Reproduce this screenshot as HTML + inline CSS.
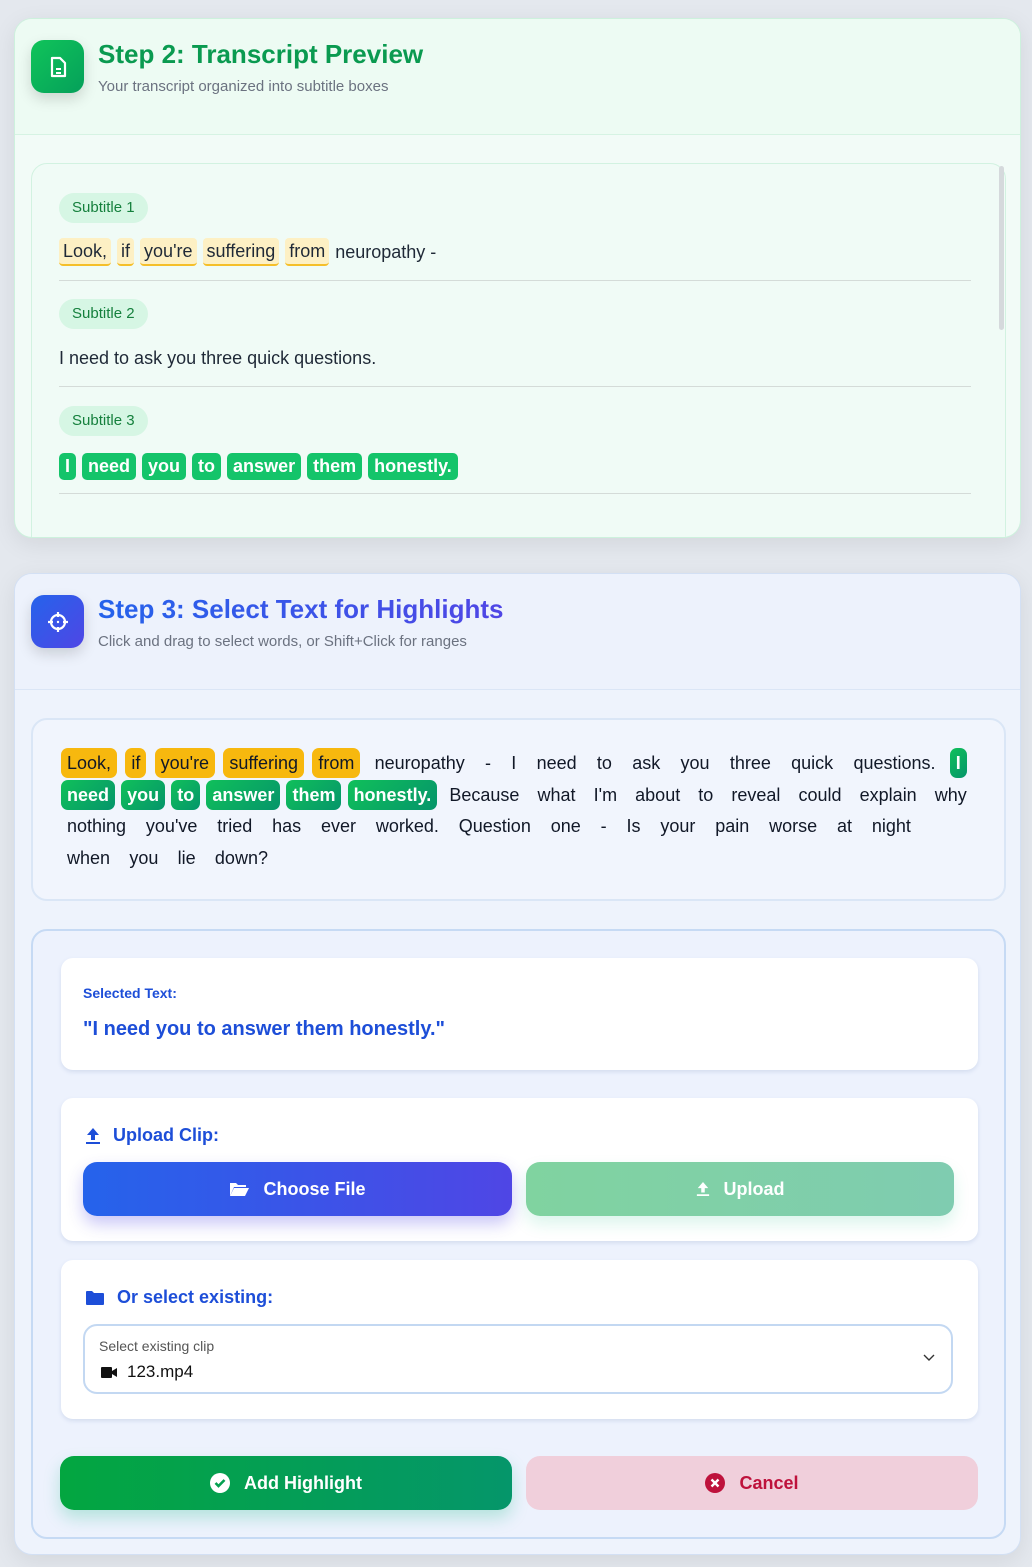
<!DOCTYPE html>
<html><head><meta charset="utf-8"><style>
*{box-sizing:border-box;margin:0;padding:0}
body{width:1032px;height:1567px;background:#e4e8ee;font-family:"Liberation Sans",sans-serif;position:relative;overflow:hidden;color:#1f2937}
.abs{position:absolute}
.card{position:absolute;left:14px;width:1007px;border-radius:18px;box-shadow:0 6px 24px rgba(0,0,0,.08);overflow:hidden}
.icon{position:absolute;left:16px;width:53px;height:53px;border-radius:13px;box-shadow:0 6px 14px rgba(0,0,0,.15);display:flex;align-items:center;justify-content:center}
.title{position:absolute;left:83px;font-size:26px;font-weight:bold}
.sub{position:absolute;left:83px;font-size:15px;color:#6b7280}
.pill{position:absolute;left:45px;height:30px;padding:0 13px;border-radius:15px;background:#d6f6e4;color:#15803d;font-size:15px;line-height:30px}
.line{position:absolute;left:45px;width:912px;height:1px;background:#d4dbd8}
.row{position:absolute;left:45px;font-size:18px;display:flex;gap:6px;align-items:center;height:30px}
.y{background:#fdf0c4;border-bottom:2px solid #f5bf2a;border-radius:4px;padding:0 4px;line-height:26px}
.g{background:#14c46a;color:#fff;font-weight:bold;border-radius:5px;padding:0 6px;line-height:27px}
.tl{position:absolute;left:28px;width:912px;display:flex;justify-content:space-between;font-size:18px;height:31px;align-items:center;color:#111827}
.tl span{padding:0 6px;line-height:30px;border-radius:7px}
.Y{background:#f7b80e}
.G{background:linear-gradient(135deg,#10c05a,#05956a);color:#fff;font-weight:bold}
.wc{position:absolute;left:28px;width:917px;background:#fff;border-radius:12px;box-shadow:0 2px 4px rgba(100,130,180,.18)}
.btn{position:absolute;height:54px;border-radius:14px;display:flex;align-items:center;justify-content:center;gap:14px;font-size:18px;font-weight:bold;color:#fff}
.lbl{position:absolute;left:24px;font-size:18px;font-weight:bold;color:#1d4ed8;display:flex;align-items:center;gap:12px}
</style></head><body>

<div class="card" style="top:18px;height:520px;background:#f2fbf7;border:1px solid #cdf1dd">
  <div class="abs" style="left:0;top:0;width:1007px;height:116px;background:#edfbf3;border-bottom:1px solid #d6f3e3"></div>
  <div class="icon" style="top:21px;background:linear-gradient(135deg,#10c45a,#05a05a)">
    <svg width="22" height="24" viewBox="0 0 22 24"><path d="M5 3h8l5 5v13H5z" fill="none" stroke="#fff" stroke-width="2.2" stroke-linejoin="round"/><path d="M9 14h5M9 18h5" stroke="#fff" stroke-width="2"/></svg>
  </div>
  <div class="title" style="top:20px;color:#0a9a50">Step 2: Transcript Preview</div>
  <div class="sub" style="top:59px">Your transcript organized into subtitle boxes</div>
  <div class="abs" style="left:16px;top:144px;width:975px;height:400px;border:1px solid #d2f2e1;border-radius:16px;background:#f0fbf6">
    <div class="abs" style="left:967px;top:2px;width:5px;height:164px;background:#d5d9dc;border-radius:3px"></div>
    <div class="pill" style="top:29px;left:27px">Subtitle 1</div>
    <div class="row" style="top:73px;left:27px"><span class="y">Look,</span><span class="y">if</span><span class="y">you're</span><span class="y">suffering</span><span class="y">from</span><span>neuropathy -</span></div>
    <div class="line" style="top:116px;left:27px"></div>
    <div class="pill" style="top:135px;left:27px">Subtitle 2</div>
    <div class="row" style="top:179px;left:27px"><span>I need to ask you three quick questions.</span></div>
    <div class="line" style="top:222px;left:27px"></div>
    <div class="pill" style="top:242px;left:27px">Subtitle 3</div>
    <div class="row" style="top:287px;left:27px"><span class="g">I</span><span class="g">need</span><span class="g">you</span><span class="g">to</span><span class="g">answer</span><span class="g">them</span><span class="g">honestly.</span></div>
    <div class="line" style="top:329px;left:27px"></div>
  </div>
</div>

<div class="card" style="top:573px;height:982px;background:#eef3fc;border:1px solid #d3e0f4">
  <div class="abs" style="left:0;top:0;width:1007px;height:116px;background:#edf2fc;border-bottom:1px solid #dbe6f6"></div>
  <div class="icon" style="top:21px;background:linear-gradient(135deg,#2563eb,#4f46e5)">
    <svg width="24" height="24" viewBox="0 0 24 24"><circle cx="12" cy="12" r="7" fill="none" stroke="#fff" stroke-width="2.2"/><path d="M12 2v5M12 17v5M2 12h5M17 12h5" stroke="#fff" stroke-width="2.2"/><circle cx="12" cy="12" r="1.2" fill="#fff"/></svg>
  </div>
  <div class="title" style="top:20px;background:linear-gradient(90deg,#2563eb,#4f46e5);-webkit-background-clip:text;color:transparent">Step 3: Select Text for Highlights</div>
  <div class="sub" style="top:59px">Click and drag to select words, or Shift+Click for ranges</div>

  <div class="abs" style="left:16px;top:144px;width:975px;height:183px;border:2px solid #dae6f6;border-radius:16px;background:#f1f5fd">
    <div class="tl" style="top:27px;width:906px"><span class="Y">Look,</span><span class="Y">if</span><span class="Y">you're</span><span class="Y">suffering</span><span class="Y">from</span><span>neuropathy</span><span>-</span><span>I</span><span>need</span><span>to</span><span>ask</span><span>you</span><span>three</span><span>quick</span><span>questions.</span><span class="G">I</span></div>
    <div class="tl" style="top:59px;width:912px"><span class="G">need</span><span class="G">you</span><span class="G">to</span><span class="G">answer</span><span class="G">them</span><span class="G">honestly.</span><span>Because</span><span>what</span><span>I'm</span><span>about</span><span>to</span><span>reveal</span><span>could</span><span>explain</span><span>why</span></div>
    <div class="tl" style="top:90px;width:856px"><span>nothing</span><span>you've</span><span>tried</span><span>has</span><span>ever</span><span>worked.</span><span>Question</span><span>one</span><span>-</span><span>Is</span><span>your</span><span>pain</span><span>worse</span><span>at</span><span>night</span></div>
    <div class="tl" style="top:122px;width:213px"><span>when</span><span>you</span><span>lie</span><span>down?</span></div>
  </div>

  <div class="abs" style="left:16px;top:355px;width:975px;height:610px;border:2px solid #c6daf4;border-radius:16px;background:#edf2fd">
    <div class="wc" style="top:27px;height:112px">
      <div class="abs" style="left:22px;top:27px;font-size:14px;font-weight:bold;color:#1d4ed8">Selected Text:</div>
      <div class="abs" style="left:22px;top:60px;font-size:20px;font-weight:bold;color:#1d4ed8">"I need you to answer them honestly."</div>
    </div>
    <div class="wc" style="top:167px;height:143px">
      <div class="lbl" style="top:27px"><svg width="16" height="18" viewBox="0 0 16 18"><path d="M8 1L2 8h4v5h4V8h4z" fill="#1d4ed8"/><rect x="1" y="15" width="14" height="2" fill="#1d4ed8"/></svg>Upload Clip:</div>
      <div class="btn" style="left:22px;top:64px;width:429px;background:linear-gradient(90deg,#2563eb,#4f46e5);box-shadow:0 8px 16px rgba(79,70,229,.3)"><svg width="20" height="16" viewBox="0 0 20 16"><path d="M1 2h6l2 2h8v2H5L1 15z" fill="#fff"/><path d="M5 7h15l-4 8H1z" fill="#fff"/></svg>Choose File</div>
      <div class="btn" style="left:465px;top:64px;width:428px;background:linear-gradient(90deg,#80d3a0,#7fccb0);box-shadow:0 8px 16px rgba(16,185,129,.15)"><svg width="14" height="16" viewBox="0 0 16 18"><path d="M8 1L2 8h4v5h4V8h4z" fill="#fff"/><rect x="1" y="15" width="14" height="2" fill="#fff"/></svg>Upload</div>
    </div>
    <div class="wc" style="top:329px;height:159px">
      <div class="lbl" style="top:27px"><svg width="20" height="16" viewBox="0 0 20 16"><path d="M1 2q0-1 1-1h5l2 2h9q1 0 1 1v10q0 1-1 1H2q-1 0-1-1z" fill="#1d4ed8"/></svg>Or select existing:</div>
      <div class="abs" style="left:22px;top:64px;width:870px;height:70px;border:2px solid #c3d8f2;border-radius:14px">
        <div class="abs" style="left:14px;top:12px;font-size:14px;color:#555">Select existing clip</div>
        <div class="abs" style="left:16px;top:36px;font-size:17px;color:#111;display:flex;align-items:center;gap:10px"><svg width="16" height="11" viewBox="0 0 16 11"><rect x="0" y="0" width="11" height="11" rx="1" fill="#111"/><path d="M11 4l5-3v9l-5-3z" fill="#111"/></svg>123.mp4</div>
        <svg class="abs" style="left:838px;top:28px" width="12" height="8" viewBox="0 0 12 8"><path d="M1 1l5 5 5-5" fill="none" stroke="#333" stroke-width="1.4"/></svg>
      </div>
    </div>
    <div class="btn" style="left:27px;top:525px;width:452px;background:linear-gradient(90deg,#03a640,#05966a);box-shadow:0 8px 16px rgba(16,185,129,.25)"><svg width="20" height="20" viewBox="0 0 20 20"><circle cx="10" cy="10" r="10" fill="#fff"/><path d="M5.5 10l3 3 6-6" fill="none" stroke="#04a050" stroke-width="2.6"/></svg>Add Highlight</div>
    <div class="btn" style="left:493px;top:525px;width:452px;background:#f0cfdb;color:#be123c"><svg width="20" height="20" viewBox="0 0 20 20"><circle cx="10" cy="10" r="10" fill="#be123c"/><path d="M6.5 6.5l7 7M13.5 6.5l-7 7" stroke="#fff" stroke-width="2.4"/></svg>Cancel</div>
  </div>
</div>
</body></html>
